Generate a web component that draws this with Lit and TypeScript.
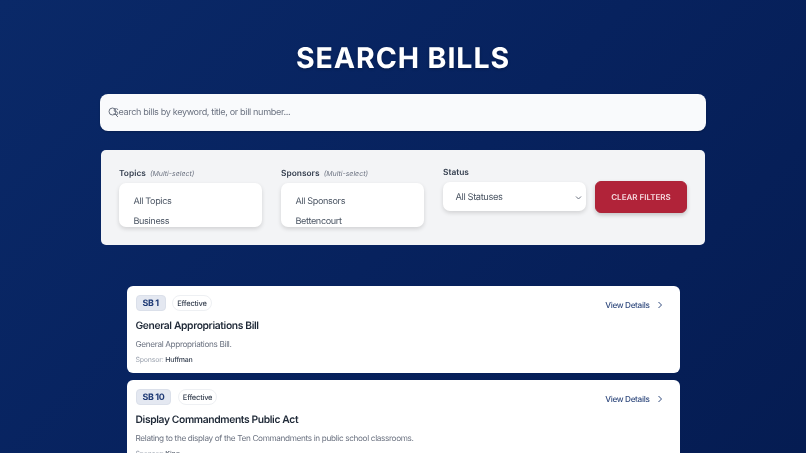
import { LitElement, html, css } from "lit";
import { customElement } from "lit/decorators.js";

const bills = [
  { id: "SB 1", status: "Effective", title: "General Appropriations Bill", desc: "General Appropriations Bill.", sponsor: "Huffman" },
  { id: "SB 10", status: "Effective", title: "Display Commandments Public Act", desc: "Relating to the display of the Ten Commandments in public school classrooms.", sponsor: "King" },
];

@customElement("app-root")
export class AppRoot extends LitElement {
  static styles = css`
    :host {
      display: block;
      height: 453px;
      overflow: hidden;
      font-family: Inter, "Liberation Sans", sans-serif;
      background: linear-gradient(135deg, #0a2968 0%, #07225e 50%, #051c52 100%);
      color: #1f2937;
      text-rendering: geometricPrecision;
    }
    .page { display: flex; flex-direction: column; align-items: center; padding-top: 40px; filter: blur(0.3px); }
    h1 {
      margin: 0 0 19px;
      font-size: 28.5px;
      line-height: 35px;
      font-weight: 700;
      letter-spacing: .95px;
      color: #fff;
      text-shadow: 0 1px 3px rgba(0,0,0,.25);
    }
    .search { position: relative; width: 606px; height: 37px; }
    .search input {
      box-sizing: border-box;
      width: 100%;
      height: 100%;
      border: 0;
      outline: 0;
      border-radius: 8px;
      padding: 0 13px;
      background: #f9fafc;
      font: 400 9.1px Inter, sans-serif;
      letter-spacing: -.35px;
      text-rendering: geometricPrecision;
      color: #374151;
      box-shadow: 0 1px 2px rgba(0,0,0,.2);
    }
    .search input::placeholder { color: #6b7280; opacity: 1; }
    .search svg { position: absolute; left: 8px; top: 13px; }
    .filters {
      box-sizing: border-box;
      width: 604px;
      height: 95px;
      margin-top: 19px;
      padding: 17.5px 18px 0;
      border-radius: 5px;
      background: #f3f4f6;
      display: grid;
      grid-template-columns: 143px 143px 143px 92px;
      column-gap: 19px;
      align-items: start;
    }
    .lab { font-size: 8.4px; line-height: 11px; font-weight: 600; color: #374151; margin-bottom: 3.5px; white-space: nowrap; }
    .lab em { font-weight: 400; font-size: 7px; color: #6b7280; margin-left: 2px; }
    .multi {
      box-sizing: border-box;
      height: 44px;
      overflow: hidden;
      border-radius: 7px;
      background: #fff;
      padding: 13px 14.5px 0;
      font-size: 9.1px;
      letter-spacing: -.04em;
      color: #4b5563;
      box-shadow: 0 2px 4px rgba(0,0,0,.14);
    }
    .multi div { line-height: 12px; margin-bottom: 8px; }
    .single {
      box-sizing: border-box;
      height: 29px;
      border-radius: 7px;
      background: #fff;
      padding: 2px 4px 0 12.5px;
      display: flex;
      align-items: center;
      justify-content: space-between;
      font-size: 9.3px;
      letter-spacing: -.04em;
      color: #4b5563;
      box-shadow: 0 2px 4px rgba(0,0,0,.14);
    }
    button {
      align-self: start;
      margin: 13.5px 0 0 -10px;
      width: 92px;
      height: 32px;
      border: 1px solid #ad2438;
      border-radius: 6px;
      background: #b12339;
      color: #f6dde1;
      font: 600 8px Inter, sans-serif;
      text-rendering: geometricPrecision;
      padding: 0;
      box-shadow: 0 2px 4px rgba(0,0,0,.2);
    }
    .list { width: 553px; margin-top: 41px; display: flex; flex-direction: column; gap: 7px; }
    .card {
      box-sizing: border-box;
      height: 87px;
      padding: 9px 17px 0 9px;
      border-radius: 6px;
      background: #fff;
      flex: none;
    }
    .top { display: flex; align-items: center; gap: 6.5px; height: 16px; }
    .id {
      box-sizing: border-box;
      padding: 0 6px;
      height: 16px;
      line-height: 15px;
      border: 1px solid #dbe0ea;
      border-radius: 4px;
      background: #e4e8f1;
      color: #1f3a75;
      font-size: 8.9px;
      letter-spacing: -.04em;
      font-weight: 700;
    }
    .st {
      height: 14px;
      line-height: 15px;
      padding: 0 4px;
      border: 1px solid #eef0f3;
      border-radius: 8px;
      font-size: 7.5px;
      letter-spacing: -.03em;
      font-weight: 500;
      color: #374151;
    }
    .view {
      margin: 4px 0 0 auto;
      display: flex;
      align-items: center;
      gap: 7px;
      font-size: 8.2px;
      letter-spacing: -.04em;
      font-weight: 500;
      color: #334c7f;
    }
    h2 { margin: 8px 0 0; font-size: 10.3px; letter-spacing: -.37px; line-height: 14px; font-weight: 600; color: #1f2937; }
    .desc { margin: 6px 0 0; font-size: 8.2px; letter-spacing: -.34px; line-height: 11px; color: #6b7280; }
    .sp { margin: 4px 0 0; font-size: 7px; letter-spacing: -.03em; line-height: 11px; color: #9ca3af; }
    .sp b { font-weight: 500; color: #374151; }
  `;

  render() {
    return html`<div class="page">
      <h1>SEARCH BILLS</h1>
      <div class="search">
        <input placeholder="Search bills by keyword, title, or bill number..." />
        <svg width="11" height="11" viewBox="0 0 11 11" fill="none" stroke="#6b7280" stroke-width="1"><circle cx="4.5" cy="4.5" r="3.5"/><path d="M7 7l3 3"/></svg>
      </div>
      <div class="filters">
        <div class="field">
          <div class="lab">Topics <em>(Multi-select)</em></div>
          <div class="multi"><div>All Topics</div><div>Business</div></div>
        </div>
        <div class="field">
          <div class="lab">Sponsors <em>(Multi-select)</em></div>
          <div class="multi"><div>All Sponsors</div><div>Bettencourt</div></div>
        </div>
        <div class="field">
          <div class="lab">Status</div>
          <div class="single"><span>All Statuses</span>
            <svg width="7" height="7" viewBox="0 0 7 7" fill="none" stroke="#6b7280" stroke-width="1"><path d="M1 2.5l2.5 2.5L6 2.5"/></svg>
          </div>
        </div>
        <button>CLEAR FILTERS</button>
      </div>
      <div class="list">
        ${bills.map(b => html`<div class="card">
          <div class="top">
            <span class="id">${b.id}</span><span class="st">${b.status}</span>
            <span class="view">View Details
              <svg width="6" height="8" viewBox="0 0 6 8" fill="none" stroke="#334c7f" stroke-width="1"><path d="M1.5 1l3 3-3 3"/></svg>
            </span>
          </div>
          <h2>${b.title}</h2>
          <p class="desc">${b.desc}</p>
          <p class="sp">Sponsor: <b>${b.sponsor}</b></p>
        </div>`)}
      </div>
    </div>`;
  }
}
